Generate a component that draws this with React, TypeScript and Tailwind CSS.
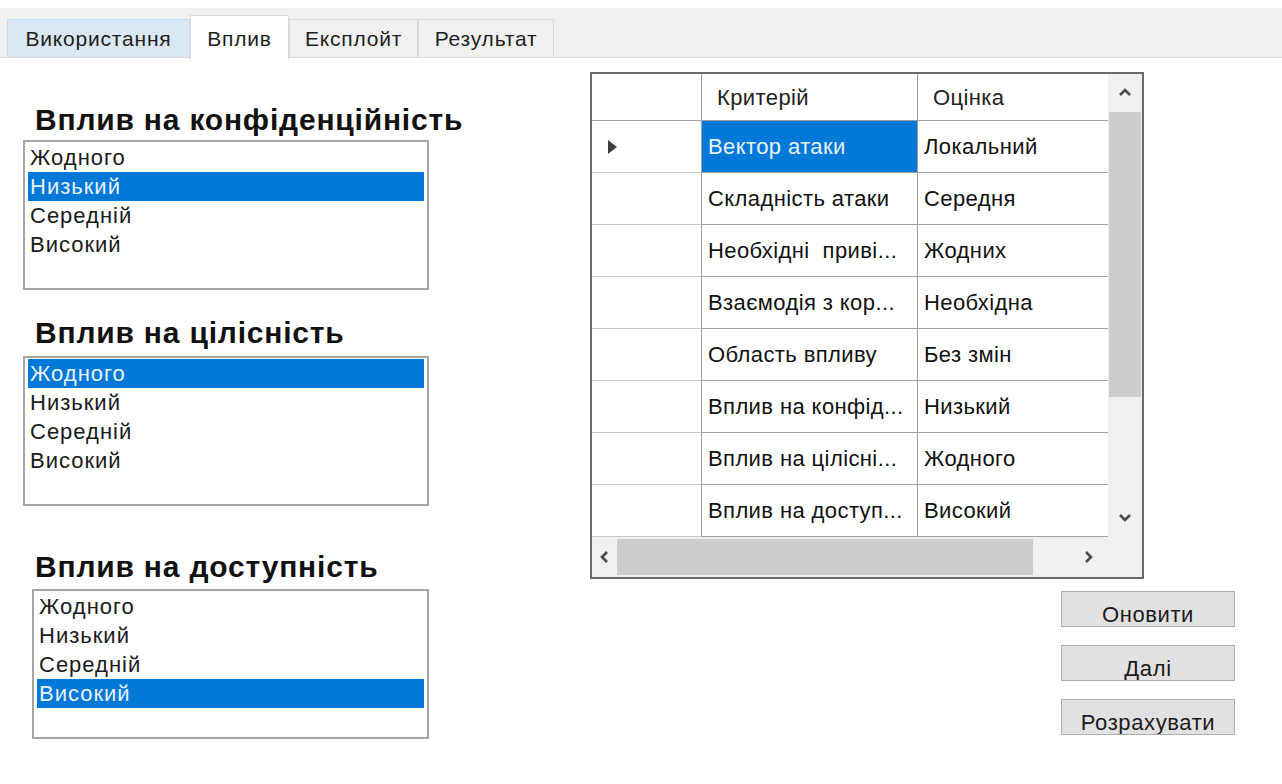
import React from "react"

const levels = ["Жодного", "Низький", "Середній", "Високий"]

const rows: [string, string][] = [
  ["Вектор атаки", "Локальний"],
  ["Складність атаки", "Середня"],
  ["Необхідні  приві...", "Жодних"],
  ["Взаємодія з кор...", "Необхідна"],
  ["Область впливу", "Без змін"],
  ["Вплив на конфід...", "Низький"],
  ["Вплив на цілісні...", "Жодного"],
  ["Вплив на доступ...", "Високий"],
]

function Chevron({ dir }: { dir: "up" | "down" | "left" | "right" }) {
  const d = {
    up: "M2 9 L7 4 L12 9",
    down: "M2 5 L7 10 L12 5",
    left: "M9 2 L4 7 L9 12",
    right: "M5 2 L10 7 L5 12",
  }[dir]
  return (
    <svg width="14" height="14" viewBox="0 0 14 14" fill="none">
      <path d={d} stroke="#4a4a4a" strokeWidth="2.6" />
    </svg>
  )
}

function ListBox({ selected, width = "w-[406px]", className = "" }: { selected: number; width?: string; className?: string }) {
  return (
    <div className={`h-[150px] ${width} border-2 border-[#a5a5a5] bg-white pt-[1px] px-[3px] ${className}`}>
      {levels.map((l, i) => (
        <div
          key={l}
          className={`h-[29px] pl-[2px] text-[22px] leading-[29px] tracking-[1px] ${
            i === selected ? "bg-[#0078d7] text-[#eaf3ff]" : "text-[#1a1a1a]"
          }`}
        >
          {l}
        </div>
      ))}
    </div>
  )
}

function Heading({ children, className = "" }: { children: React.ReactNode; className?: string }) {
  return (
    <h2 className={`pl-[12px] text-[30px] font-bold leading-[34px] tracking-[0.8px] text-[#111] ${className}`}>
      {children}
    </h2>
  )
}

function Tab({ label, active, hover, width }: { label: string; active?: boolean; hover?: boolean; width: string }) {
  if (active) {
    return (
      <div className={`${width} -mb-[2px] flex h-[44px] items-start justify-center border border-b-0 border-[#d9d9d9] bg-white pt-[7px] text-[21px] tracking-[0.8px] text-[#1e1e1e]`}>
        {label}
      </div>
    )
  }
  return (
    <div
      className={`${width} flex h-[38px] items-center justify-center border border-b-0 text-[21px] tracking-[0.8px] text-[#1e1e1e] ${
        hover ? "border-[#c5dbef] bg-[#dae7f4]" : "border-[#d9d9d9] bg-[#f0f0f0]"
      }`}
    >
      {label}
    </div>
  )
}

function DataGrid() {
  return (
    <div className="w-[554px] border-2 border-[#6a6a6a] bg-white text-[22px] tracking-[0.4px] text-[#111]">
      <div className="flex">
        <div className="w-[516px]">
          {/* header */}
          <div className="flex h-[47px] border-b border-[#a0a0a0]">
            <div className="w-[110px] border-r border-[#a0a0a0]" />
            <div className="flex w-[216px] items-center border-r border-[#a0a0a0] pl-[15px] text-[#222]">Критерій</div>
            <div className="flex w-[190px] items-center pl-[15px] text-[#222]">Оцінка</div>
          </div>
          {rows.map(([name, value], i) => (
            <div key={name} className="flex h-[52px]">
              <div className="flex w-[110px] items-center border-r border-b border-r-[#a0a0a0] border-b-[#c8c8c8] pl-[16px]">
                {i === 0 && (
                  <svg width="10" height="14" viewBox="0 0 10 14">
                    <path d="M0 0 L9 7 L0 14 Z" fill="#404040" />
                  </svg>
                )}
              </div>
              <div
                className={`flex w-[216px] items-center overflow-hidden whitespace-pre border-r border-b border-[#a0a0a0] pl-[6px] ${
                  i === 0 ? "bg-[#0078d7] text-[#eaf3ff]" : ""
                }`}
              >
                {name}
              </div>
              <div className="flex w-[190px] items-center border-b border-[#a0a0a0] pl-[6px]">{value}</div>
            </div>
          ))}
        </div>
        {/* vertical scrollbar */}
        <div className="flex w-[34px] flex-col bg-[#f0f0f0]">
          <div className="flex h-[38px] items-center justify-center">
            <Chevron dir="up" />
          </div>
          <div className="mx-[1px] h-[285px] bg-[#cdcdcd]" />
          <div className="flex-1" />
          <div className="flex h-[40px] items-center justify-center">
            <Chevron dir="down" />
          </div>
        </div>
      </div>
      {/* horizontal scrollbar */}
      <div className="flex h-[40px] bg-[#f0f0f0]">
        <div className="flex w-[25px] items-center justify-center">
          <Chevron dir="left" />
        </div>
        <div className="my-[2px] w-[416px] bg-[#cdcdcd]" />
        <div className="flex-1" />
        <div className="flex w-[40px] items-center justify-center">
          <Chevron dir="right" />
        </div>
        <div className="w-[34px]" />
      </div>
    </div>
  )
}

function Button({ label }: { label: string }) {
  return (
    <button className="flex h-[36px] w-[174px] items-end justify-center overflow-hidden border border-[#adadad] bg-[#e1e1e1] text-[22px] leading-[24px] tracking-[0.6px] text-[#1a1a1a]">
      <span className="translate-y-[1px]">{label}</span>
    </button>
  )
}

export default function App() {
  return (
    <div className="h-[784px] w-[1282px] overflow-hidden bg-white font-['Liberation_Sans',Arial,sans-serif]">
      {/* tab strip */}
      <div className="mt-[8px] flex h-[50px] items-end border-b border-[#dcdcdc] bg-[#f0f0f0] pl-[7px]">
        <Tab label="Використання" hover width="w-[183px]" />
        <Tab label="Вплив" active width="w-[99px]" />
        <Tab label="Експлойт" width="w-[129px]" />
        <Tab label="Результат" width="w-[136px]" />
      </div>

      <div className="flex">
        {/* impact lists */}
        <div className="w-[590px] pl-[23px]">
          <Heading className="mt-[45px] mb-[3px]">Вплив на конфіденційність</Heading>
          <ListBox selected={1} />
          <Heading className="mt-[26px] mb-[6px]">Вплив на цілісність</Heading>
          <ListBox selected={0} />
          <Heading className="mt-[44px] mb-[5px]">Вплив на доступність</Heading>
          <ListBox selected={3} width="w-[397px]" className="ml-[9px]" />
        </div>

        {/* summary table and actions */}
        <div className="flex w-[645px] flex-col">
          <div className="mt-[14px]">
            <DataGrid />
          </div>
          <div className="mt-[12px] flex flex-col items-end gap-[18px]">
            <Button label="Оновити" />
            <Button label="Далі" />
            <Button label="Розрахувати" />
          </div>
        </div>
      </div>
    </div>
  )
}
